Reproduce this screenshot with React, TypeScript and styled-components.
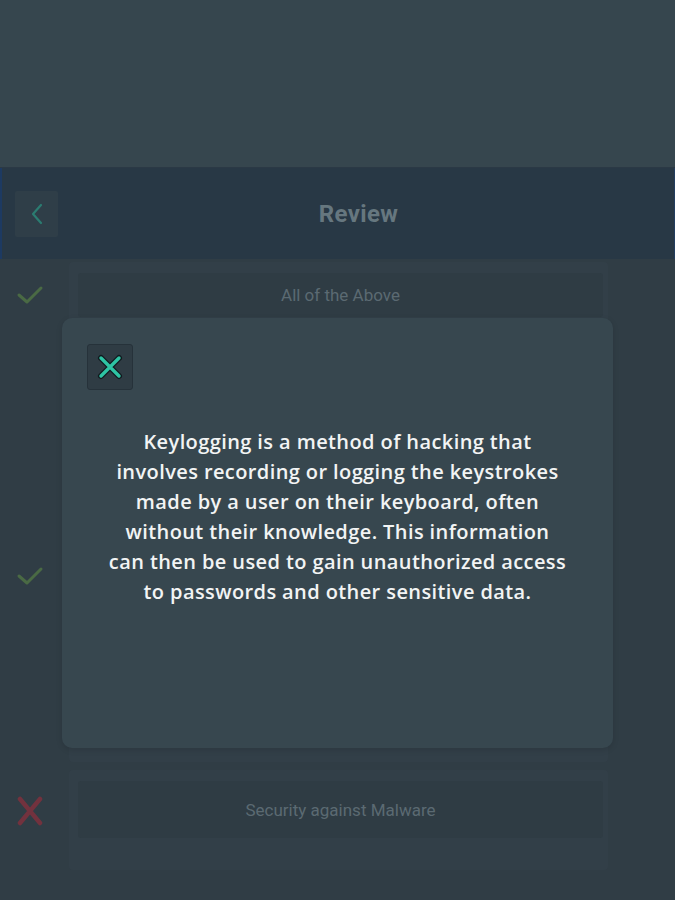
import React from "react";
import styled, { createGlobalStyle } from "styled-components";

const Global = createGlobalStyle`
  html, body { margin: 0; padding: 0; background: #36464e; }
  body { width: 675px; height: 900px; overflow: hidden; font-family: "Roboto", "Liberation Sans", sans-serif; }
  #root { width: 675px; height: 900px; }
`;

const Page = styled.div`
  position: relative;
  width: 675px;
  height: 900px;
  overflow: hidden;
  display: flex;
  flex-direction: column;
  background: #36464e;
  & > * { flex-shrink: 0; }
`;

const TopSpace = styled.div`
  height: 167px;
  background: #36464e;
  border-bottom: 1px solid #2b3945;
`;

const Header = styled.header`
  height: 91px;
  display: flex;
  align-items: center;
  padding: 0 15px 0 13px;
  background: #283845;
  border-left: 2px solid #1d3a62;
  border-right: 1px solid #233d5e;
  box-sizing: border-box;
`;

const BackButton = styled.button`
  width: 43px;
  height: 46px;
  border: none;
  border-radius: 2px;
  background: #2f3e48;
  display: flex;
  align-items: center;
  justify-content: center;
  padding: 0;
`;

const Title = styled.h1`
  flex: 1;
  margin: 0;
  text-align: center;
  font-family: "Roboto", sans-serif;
  font-weight: 700;
  font-size: 24px;
  color: #66777f;
  letter-spacing: 0.4px;
`;

const List = styled.div`
  flex: 1;
  display: flex;
  flex-direction: column;
  gap: 8px;
  padding-top: 3px;
  background: #303d45;
`;

const Row = styled.div`
  display: flex;
  align-items: flex-start;
  padding-right: 67px;
`;

const Mark = styled.div<{ $h: number }>`
  width: 60px;
  height: ${(p) => p.$h}px;
  margin-top: 11px;
  display: flex;
  justify-content: center;
  align-items: center;
`;

const Card = styled.div<{ $h: number }>`
  flex: 1;
  height: ${(p) => p.$h}px;
  margin-left: 9px;
  box-sizing: border-box;
  padding: 11px 5px 0 9px;
  background: #323f48;
  border-radius: 4px;
`;

const AnswerBox = styled.div<{ $h: number }>`
  height: ${(p) => p.$h}px;
  background: #2f3c44;
  border-radius: 3px;
  display: flex;
  align-items: center;
  justify-content: center;
  font-family: "Roboto", sans-serif;
  font-size: 17px;
  color: #5b6a72;
`;

const Overlay = styled.div`
  position: absolute;
  left: 62px;
  top: 318px;
  width: 551px;
  height: 430px;
  background: #37474f;
  border-radius: 10px;
  box-sizing: border-box;
  padding: 26px 25px;
  display: flex;
  flex-direction: column;
  box-shadow: 0 2px 6px rgba(0, 0, 0, 0.12);
`;

const CloseButton = styled.button`
  width: 46px;
  height: 46px;
  padding: 0;
  border: 1px solid #26323a;
  border-radius: 3px;
  background: #2f3c44;
  display: flex;
  align-items: center;
  justify-content: center;
`;

const Message = styled.p`
  margin: 37px auto 0;
  width: 462px;
  text-align: center;
  font-family: "Open Sans", "Lato", sans-serif;
  font-weight: 600;
  font-size: 20px;
  letter-spacing: 0.4px;
  line-height: 30px;
  color: #f2f4f4;
`;

const Check = () => (
  <svg width="28" height="22" viewBox="0 0 28 22">
    <path d="M3 11 L11 18 L25 4" fill="none" stroke="#4a6a44" strokeWidth="3" strokeLinecap="round" strokeLinejoin="round" />
  </svg>
);

const Cross = () => (
  <svg width="28" height="30" viewBox="0 0 28 30">
    <path d="M4 3 L24 27 M24 3 L4 27" fill="none" stroke="#72323e" strokeWidth="4.5" strokeLinecap="round" />
  </svg>
);

export default function App() {
  return (
    <>
      <Global />
      <Page>
        <TopSpace />
        <Header>
          <BackButton aria-label="Back">
            <svg width="16" height="24" viewBox="0 0 16 24">
              <path d="M12 3 L4 12 L12 21" fill="none" stroke="#2b7c71" strokeWidth="2.2" strokeLinecap="round" strokeLinejoin="round" />
            </svg>
          </BackButton>
          <Title>Review</Title>
        </Header>
        <List>
          <Row>
            <Mark $h={44}><Check /></Mark>
            <Card $h={238}>
              <AnswerBox $h={44}>All of the Above</AnswerBox>
            </Card>
          </Row>
          <Row>
            <Mark $h={114}><Check /></Mark>
            <Card $h={254}>
              <AnswerBox $h={114} />
            </Card>
          </Row>
          <Row>
            <Mark $h={60}><Cross /></Mark>
            <Card $h={100}>
              <AnswerBox $h={57}>Security against Malware</AnswerBox>
            </Card>
          </Row>
        </List>
        <Overlay role="dialog">
          <CloseButton aria-label="Close">
            <svg width="28" height="28" viewBox="0 0 28 28">
              <path d="M5 5 L23 23 M23 5 L5 23" fill="none" stroke="#101a1e" strokeWidth="6" strokeLinecap="round" />
              <path d="M5 5 L23 23 M23 5 L5 23" fill="none" stroke="#2ec4a4" strokeWidth="3.4" strokeLinecap="round" />
            </svg>
          </CloseButton>
          <Message>
            Keylogging is a method of hacking that involves recording or logging the keystrokes made by a user on their keyboard, often without their knowledge. This information can then be used to gain unauthorized access to passwords and other sensitive data.
          </Message>
        </Overlay>
      </Page>
    </>
  );
}
